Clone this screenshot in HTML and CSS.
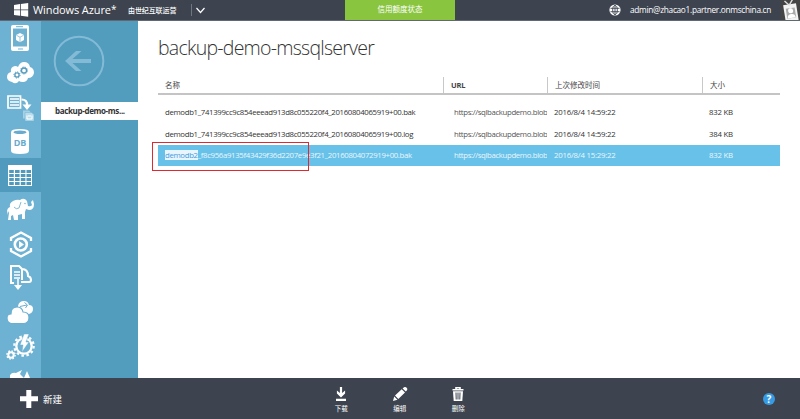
FILE: index.html
```html
<!DOCTYPE html>
<html lang="zh-CN">
<head>
<meta charset="utf-8">
<title>Windows Azure</title>
<link rel="stylesheet" href="styles.css">
</head>
<body>
<header class="topbar">
  <svg class="winlogo" viewBox="0 0 15 14"><path fill="#fff" d="M0 2l6-.9v5.5H0zM6.8 1l7.4-1v6.6H6.800zM0 7.300h6v5.500L0 12zM6.800 7.300h7.400v6.500l-7.400-1z"/></svg>
  <span class="brand">Windows Azure<sup>*</sup></span>
  <span class="operator">由世纪互联运营</span>
  <svg class="chev" viewBox="0 0 12 12"><path fill="none" stroke="#fff" stroke-width="1.200" d="M2 4l4 4.500L10 4"/></svg>
  <div class="credit">信用额度状态</div>
  <div class="account">
    <svg class="globe" viewBox="0 0 12 12"><circle cx="6" cy="6" r="5.600" fill="#fff"/><g fill="none" stroke="#3d4450" stroke-width=".9"><ellipse cx="6" cy="6" rx="2.300" ry="4.500"/><path d="M6 1.500v9M1.500 4.300h9M1.500 7.700h9"/></g></svg>
    <span class="email">admin@zhacao1.partner.onmschina.cn</span>
    <svg class="badge" viewBox="0 0 19 20"><rect width="19" height="20" fill="#444"/><g transform="rotate(-9 10 10)"><path d="M3 4h13v17H3z" fill="#f3f3f3"/><path d="M5 8h9v10H5z" fill="#aaa"/><circle cx="9.500" cy="10.700" r="2.500" fill="#fff"/><path d="M5.500 18q0-4 4-4t4 4z" fill="#fff"/><path d="M5 0l4 5M13 0L9 5" stroke="#ddd" stroke-width="1.400"/></g></svg>
  </div>
</header>
<div class="workspace">
  <nav class="rail">
    <svg viewBox="0 0 41 34.3"><rect x="11" y="4" width="18" height="26" rx="2" fill="#fff"/><path d="M13 7.500h14v18H13z" fill="#6db0d0"/><path d="M16 5.700h7M18 28h5" stroke="#6db0d0"/><path d="M20 12l4 2v5l-4 2.200-4-2.200v-5z" fill="#fff"/><path d="M16.300 14.200l3.700 2 3.700-2M20 16.200V21" fill="none" stroke="#6db0d0" stroke-width=".7"/></svg>
    <svg viewBox="0 0 41 34.3"><path fill="#fff" d="M12 27q-5-1-5-5 0-4 4-5-1-5 4-6 2 0 3 1 2-5 6-5 5 0 6 5 4 1 4 6-1 5-6 5-1 4-5 4-3 0-4-1-3 4-7 1z"/><g fill="none" stroke="#549bbe" stroke-width="1.300"><circle cx="17" cy="20" r="2.100"/><circle cx="24" cy="15.500" r="2.500"/></g><g fill="none" stroke="#549bbe" stroke-width="1" stroke-dasharray="1.200 1.200"><circle cx="17" cy="20" r="3.100"/><circle cx="24" cy="15.500" r="3.500"/></g></svg>
    <svg viewBox="0 0 41 34.3"><path fill="none" stroke="#fff" stroke-width="1.700" d="M8 6h12.500v12H8z"/><path fill="none" stroke="#fff" stroke-width="1.500" d="M10 9h9M10 12h9M10 15h9"/><path fill="none" stroke="#fff" stroke-width="2.200" d="M21.500 9.500q6 0 5.500 6"/><path fill="#fff" d="M22.500 14.500h9L27 20z"/><path fill="#a5d0e5" d="M23 20.500h6l2 2v6h-8z"/><path fill="#b9dcec" stroke="#6eb2d3" stroke-width=".5" d="M25 22.500h6.500l2.500 2V31h-9z"/><path d="M27 25.500v3.500h5v-3.500M28 26h3" fill="none" stroke="#fff"/></svg>
    <svg viewBox="0 0 41 34.3"><path fill="#fff" d="M11 8.300q0-3.300 9-3.300t9 3.300v18.500q0 3.200-9 3.200t-9-3.200z"/><ellipse cx="20" cy="8.300" rx="6.500" ry="1.800" fill="#69abcd"/><text class="dbtext" x="20" y="21.800" text-anchor="middle">DB</text></svg>
    <svg class="selected" viewBox="0 0 41 34.3"><path fill="#fff" d="M8 7h24v21H8z"/><g fill="#4f99bc"><path d="M9.200 12h4.600v3H9.200zM15 12h4.600v3H15zM20.800 12h4.600v3h-4.600zM26.500 12H31v3h-4.500zM9.200 16h4.600v3H9.200zM15 16h4.600v3H15zM20.800 16h4.600v3h-4.600zM26.500 16H31v3h-4.500zM9.200 20h4.600v3H9.200zM15 20h4.600v3H15zM20.800 20h4.600v3h-4.600zM26.500 20H31v3h-4.500zM9.200 24h4.600v3H9.200zM15 24h4.600v3H15zM20.800 24h4.600v3h-4.600zM26.500 24H31v3h-4.500z"/></g></svg>
    <svg viewBox="0 0 41 34.3"><path fill="#fff" d="M7 20q0-4 3-5-1-4 3-6 4-2 7-1 4-3 7 1l1 5q3 1 4-1l-1-3 2-2 1 4q0 6-5 6l-3-1-1 3v7h-3v-5l-4 1v5h-4l-1-5-2 1v4H8l1-7-1-2-1 4z"/><path d="M14 15q2 3 5 1l2-6" fill="none" stroke="#83bdd8"/><circle cx="25" cy="11.500" r=".7" fill="#69a9ca"/></svg>
    <svg viewBox="0 0 41 34.3"><path fill="none" stroke="#fff" stroke-width="2.300" d="M11 14v-3l10-5.500L31 11v3M11 21v3l10 5.500L31 24v-3"/><circle cx="20.800" cy="17.500" r="6" fill="none" stroke="#fff" stroke-width="2.600"/><path fill="#fff" d="M19 14l5 3.500-5 3.500z"/></svg>
    <svg viewBox="0 0 41 34.3"><path fill="none" stroke="#fff" stroke-width="2" d="M14 22h-3V5h8l3 3v11M22 8q6 0 6 7 3 1 3 4 0 2-2 2h-8"/><path stroke="#fff" stroke-width="1.500" d="M14 11h6M14 14h6M14 17h6M18 18v8"/><path fill="#fff" d="M14 24h8l-4 5z"/></svg>
    <svg viewBox="0 0 41 34.3"><path fill="#fff" d="M18 11q1-5 6-5 4 0 5 4 4 0 4 4t-4 5H17z"/><path fill="none" stroke="#6bafd0" d="M20 11.500l7-1.500M24.500 7.500L27.500 10l-2 3"/><path fill="#fff" stroke="#6bafd0" stroke-width="1.200" d="M11 28.500q-4-1-4-5.500 0-4 4-4 0-7 6-7 5 0 6 5 6 0 6 5.500t-5 6z"/></svg>
    <svg viewBox="0 0 41 34.3"><circle cx="24" cy="16" r="7.700" fill="none" stroke="#fff" stroke-width="2.300"/><circle cx="24" cy="16" r="9.700" fill="none" stroke="#fff" stroke-width="2.200" stroke-dasharray="2.500 2.580"/><path fill="#fff" stroke="#6bafd0" stroke-width=".5" d="M24 4h5l-3 8h3l-7 10 1-7h-3z"/><circle cx="11" cy="25" r="2.700" fill="none" stroke="#fff" stroke-width="2"/><circle cx="11" cy="25" r="4.100" fill="none" stroke="#fff" stroke-width="1.400" stroke-dasharray="1.600 1.620"/></svg>
    <svg viewBox="0 0 41 34.3"><path fill="#fff" d="M10 11q2-3 6-2l6-3-2 4 4 4H10zM24 14l3-7 3 7z"/></svg>
  </nav>
  <aside class="side">
    <svg class="back" viewBox="0 0 52 52"><circle cx="26" cy="26" r="24.300" fill="none" stroke="#83bad6" stroke-width="2"/><path fill="#83bad6" d="M12 26l11-10h5.500l-9 8h18.500v4H19.500l9 8H23z"/></svg>
    <div class="current">backup-demo-ms...</div>
  </aside>
  <main class="content">
    <h1>backup-demo-mssqlserver</h1>
    <div class="row head"><span>名称</span><span>URL</span><span>上次修改时间</span><span>大小</span></div>
    <div class="rows">
      <div class="row"><span class="name">demodb1_741399cc9c854eeead913d8c055220f4_20160804065919+00.bak</span><span class="url">https://sqlbackupdemo.blob</span><span>2016/8/4 14:59:22</span><span>832 KB</span></div>
      <div class="row"><span class="name">demodb1_741399cc9c854eeead913d8c055220f4_20160804065919+00.log</span><span class="url">https://sqlbackupdemo.blob</span><span>2016/8/4 14:59:22</span><span>384 KB</span></div>
      <div class="row active"><span class="name"><mark>demodb2</mark>_f8c956a9135f43429f36d2207e9e3f21_20160804072919+00.bak</span><span class="url">https://sqlbackupdemo.blob</span><span>2016/8/4 15:29:22</span><span>832 KB</span><i class="outline"></i></div>
    </div>
  </main>
</div>
<footer class="commands">
  <div class="create"><svg viewBox="0 0 18 18"><path fill="#fff" d="M6.300 0h5v6.300H18v5h-6.700V18h-5v-6.700H0v-5h6.300z"/></svg><span>新建</span></div>
  <div class="actions">
    <div class="action"><svg viewBox="0 0 16 16"><path fill="#fff" d="M6.900 1h2.200v6l3-2.500v3L8 11.500l-4.100-4v-3l3 2.500zM3 12.800h10V15H3z"/></svg><span>下载</span></div>
    <div class="action"><svg viewBox="0 0 16 16"><path fill="#fff" d="M1 15l1.200-4.500 3.300 3.300zM3 9.600l6.700-6.400L13 6.500l-6.700 6.600zM10.600 2.400L12 1.200q1.500-.8 2.700.5t.3 2.600l-1.200 1.300z"/></svg><span>编辑</span></div>
    <div class="action"><svg viewBox="0 0 16 16"><path fill="none" stroke="#fff" stroke-width="1.600" d="M6 3V1.700h4V3M2.500 3.700h11"/><path fill="#fff" d="M3 5.200h10L12.300 15H3.700z"/><path stroke="#3d4450" d="M6 6.500l.2 7M8 6.500v7M10 6.500l-.2 7"/></svg><span>删除</span></div>
  </div>
  <div class="help">?</div>
</footer>
</body>
</html>
```
FILE: styles.css
```css
* { box-sizing: border-box; }
body { margin: 0; width: 800px; height: 419px; overflow: hidden; display: flex; flex-direction: column; background: #fff; color: #333; font-family: "Open Sans", "Noto Sans CJK SC", sans-serif; font-size: 7.5px; white-space: nowrap; }
svg { display: block; flex: none; }
.topbar { position: relative; flex: none; height: 21px; display: flex; align-items: center; padding-left: 14px; background: #3d4450; color: #fff; border-bottom: 1px solid #626873; }
.winlogo { width: 15px; height: 14px; }
.brand { width: 95px; margin-left: 4px; font-size: 11px; line-height: 18px; letter-spacing: -.1px; }
.brand sup { font-size: 10px; line-height: 0; vertical-align: 1px; }
.operator { width: 63px; font-size: 7px; letter-spacing: -.1px; font-weight: 500; }
.chev { width: 18px; height: 12px; border-left: 1px solid #707681; }
.credit { position: absolute; left: 345px; top: 0; width: 110px; height: 20px; line-height: 19px; background: #8ac53f; text-align: center; font-size: 7.5px; }
.account { margin-left: auto; display: flex; align-items: center; height: 20px; }
.globe { width: 12px; height: 12px; }
.email { width: 151px; margin-left: 9px; font-size: 8.3px; letter-spacing: -.3px; line-height: 16px; }
.badge { width: 19px; height: 20px; }
.workspace { flex: none; display: flex; height: 357px; overflow: hidden; }
.rail { width: 41px; background: #6eb2d3; flex: none; }
.rail svg { width: 41px; height: 34.3px; }
.rail .selected { background: #4f9abd; }
.dbtext { font: bold 9px "Open Sans", sans-serif; fill: #69abcd; }
.side { width: 97px; flex: none; background: #529cbe; padding-top: 14px; }
.back { width: 52px; height: 52px; margin-left: 12px; }
.current { margin-top: 15px; height: 18px; line-height: 18px; background: #fff; padding-left: 14px; font-size: 8px; letter-spacing: -.35px; font-weight: 700; color: #333; }
.content { flex: 1; padding: 14px 0 0 20px; }
h1 { margin: 0 0 16px; height: 26px; line-height: 26px; font-size: 19.5px; letter-spacing: -.75px; font-weight: 300; color: #333; }
.row { position: relative; display: grid; grid-template-columns: 285px 104px 155px 78px; width: 622px; height: 21.5px; line-height: 21px; font-size: 7.8px; letter-spacing: -.23px; }
.row > span { padding-left: 7px; overflow: hidden; }
.row > .name { letter-spacing: -.335px; }
.row.head { height: 18px; line-height: 16px; font-size: 7.5px; letter-spacing: 0; border-bottom: 2px solid #c4c4c4; color: #444; }
.head span + span { border-left: 1px solid #c8c8c8; }
.head span:nth-child(2) { font-weight: 700; letter-spacing: -.2px; }
.rows { padding-top: 7px; }
.row .url { padding-left: 11px; color: #555; letter-spacing: -.36px; }
.active, .row.active .url { background: #68c1e9; color: #e9f7fd; }
.row.active { height: 21px; line-height: 20px; }
mark { background: #e8f5fc; color: #459bdf; }
.outline { position: absolute; left: -6px; top: -3px; width: 157px; height: 29px; border: 1px solid #e02830; }
.commands { flex: 1; position: relative; display: flex; align-items: center; background: #3d4450; color: #fff; }
.create { display: flex; align-items: center; gap: 5px; padding-left: 20px; font-size: 9.5px; }
.create svg { width: 18px; height: 18px; }
.actions { position: absolute; left: 312px; top: 8px; display: flex; }
.action { width: 58.5px; display: flex; flex-direction: column; align-items: center; font-size: 6.5px; line-height: 9px; gap: 2px; }
.action svg { width: 16px; height: 16px; }
.help { margin-left: auto; margin-right: 25px; width: 12px; height: 12px; border-radius: 50%; background: #379be4; text-align: center; line-height: 12px; font-size: 10px; font-weight: 700; }
```
